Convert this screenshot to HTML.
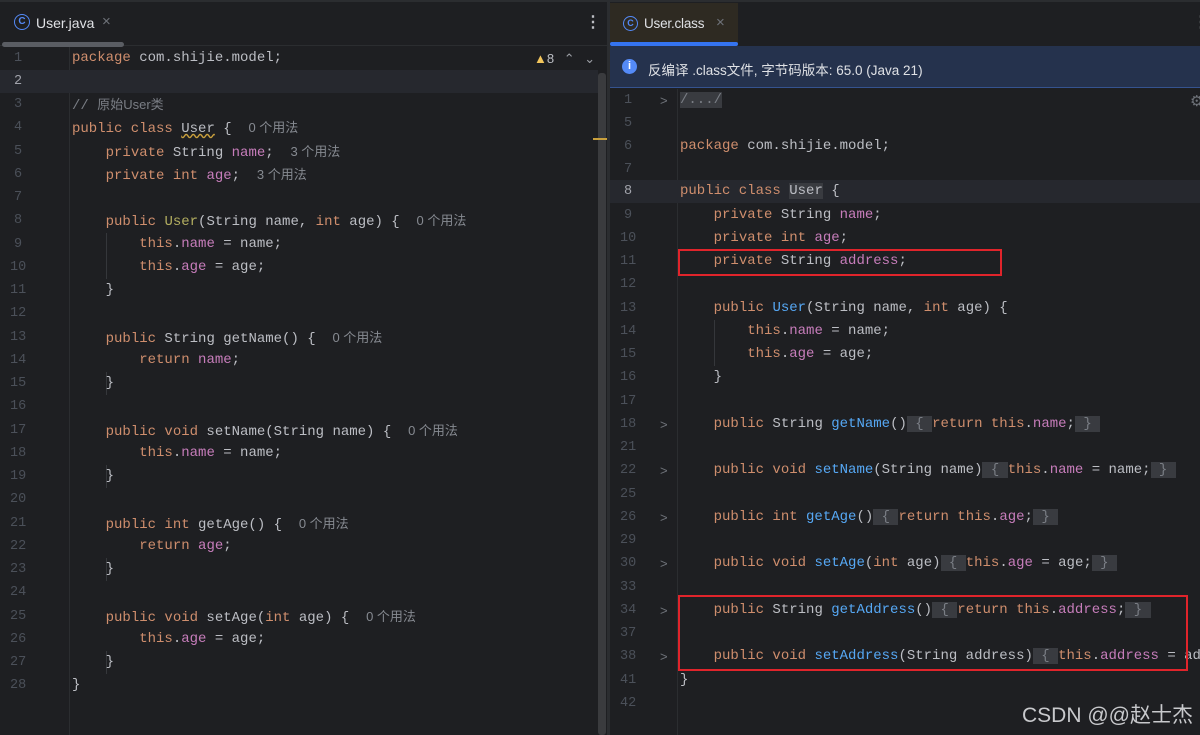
<!DOCTYPE html>
<html><head><meta charset="utf-8"><style>
*{margin:0;padding:0;box-sizing:border-box}
body{width:1200px;height:735px;overflow:hidden;background:#1e1f22;font-family:"Liberation Mono",monospace;font-size:14px;color:#bcbec4;position:relative}
.abs{position:absolute}
.ln{position:absolute;white-space:pre;height:23px;line-height:23px}
.num{position:absolute;color:#4b5059;font-size:13.5px;height:23px;line-height:23px}
.k{color:#cf8e6d}.f{color:#c77dbb}.m{color:#56a8f5}.c{color:#7a7e85}
.h{color:#868a91;font-family:"Liberation Sans","Noto Sans CJK SC",sans-serif;font-size:13px}
.fb{background:#393b40;color:#7a7e85}
.ui{font-family:"Liberation Sans","Noto Sans CJK SC",sans-serif}
.arr{position:absolute;color:#6f737a;font-family:"Liberation Sans",sans-serif;font-size:13px;height:23px;line-height:23px}
</style></head><body>
<div class="abs" style="left:0;top:0;width:607px;height:46px;background:#1e1f22;border-bottom:1px solid #2b2d30"></div>
<div class="abs" style="left:0;top:0;width:1200px;height:2px;background:#2b2d30"></div>
<div class="abs ui" style="left:14px;top:14px;width:16px;height:16px;border:1.5px solid #548af7;border-radius:50%;color:#548af7;font-size:10px;line-height:13px;text-align:center;font-weight:bold">C</div>
<div class="abs ui" style="left:36px;top:15px;font-size:14px;color:#dfe1e5">User.java</div>
<div class="abs ui" style="left:102px;top:13px;font-size:15px;color:#6f737a">×</div>
<div class="abs" style="left:2px;top:42px;width:122px;height:5px;background:#5a5d63;border-radius:3px"></div>
<div class="abs ui" style="left:585px;top:12px;color:#bcbec4;font-size:16px;font-weight:bold">⋮</div>
<div class="abs" style="left:610px;top:3px;width:128px;height:42px;background:#2e2a22"></div>
<div class="abs" style="left:610px;top:42px;width:128px;height:4px;background:#3574f0;border-radius:2px"></div>
<div class="abs ui" style="left:623px;top:16px;width:15px;height:15px;border:1.5px solid #548af7;border-radius:50%;color:#548af7;font-size:9px;line-height:12px;text-align:center;font-weight:bold">C</div>
<div class="abs ui" style="left:644px;top:16px;font-size:13.5px;color:#dfe1e5;letter-spacing:-0.2px">User.class</div>
<div class="abs ui" style="left:716px;top:14px;font-size:15px;color:#6f737a">×</div>
<div class="abs ui" style="left:1193px;top:12px;color:#bcbec4;font-size:16px;font-weight:bold">⋮</div>
<div class="abs" style="left:608px;top:46px;width:592px;height:42px;background:#25324d;border-bottom:1px solid #35538f"></div>
<div class="abs ui" style="left:622px;top:59px;width:15px;height:15px;border-radius:50%;background:#548af7;color:#fff;font-size:11px;line-height:15px;text-align:center;font-weight:bold">i</div>
<div class="abs ui" style="left:648px;top:59px;font-size:13.5px;color:#dfe1e5">反编译 .class文件, 字节码版本: 65.0 (Java 21)</div>
<div class="abs" style="left:607px;top:0;width:3px;height:735px;background:#2b2d30"></div>
<div class="abs" style="left:598px;top:73px;width:8px;height:662px;background:#3a3b3e;border-radius:3px"></div>
<div class="abs" style="left:593px;top:138px;width:14px;height:2px;background:#c9a03d"></div>
<div class="abs" style="left:69px;top:47px;width:1px;height:688px;background:#2b2d30"></div>
<div class="abs" style="left:0;top:70px;width:598px;height:23px;background:#26282e"></div>
<div class="abs ui" style="left:534px;top:51px;font-size:13px;color:#bcbec4"><span style="color:#f2c55c">▲</span>8 <span style="color:#9a9da3;margin-left:6px">⌃</span> <span style="color:#9a9da3;margin-left:6px">⌄</span></div>
<div class="abs" style="left:677px;top:89px;width:1px;height:646px;background:#2b2d30"></div>
<div class="abs" style="left:610px;top:180px;width:590px;height:23px;background:#26282e"></div>
<div class="abs" style="left:106px;top:233px;width:1px;height:46px;background:#35373b"></div>
<div class="abs" style="left:106px;top:372px;width:1px;height:23px;background:#35373b"></div>
<div class="abs" style="left:106px;top:465px;width:1px;height:23px;background:#35373b"></div>
<div class="abs" style="left:106px;top:558px;width:1px;height:23px;background:#35373b"></div>
<div class="abs" style="left:106px;top:651px;width:1px;height:23px;background:#35373b"></div>
<div class="abs" style="left:714px;top:320px;width:1px;height:46px;background:#35373b"></div>

<div class="num" style="left:14px;top:47px">1</div><div class="ln" style="left:72px;top:47px"><span class="k">package</span> com.shijie.model;</div>
<div class="num" style="left:14px;top:70px;color:#a1a3ab">2</div>
<div class="num" style="left:14px;top:93px">3</div><div class="ln" style="left:72px;top:93px"><span class="c">// </span><span class="c ui" style="font-size:13px">原始User类</span></div>
<div class="num" style="left:14px;top:116px">4</div><div class="ln" style="left:72px;top:116px"><span class="k">public class</span> <span style="text-decoration:underline wavy #c9a03d">User</span> {  <span class="h">0 个用法</span></div>
<div class="num" style="left:14px;top:140px">5</div><div class="ln" style="left:72px;top:140px">    <span class="k">private</span> String <span class="f">name</span>;  <span class="h">3 个用法</span></div>
<div class="num" style="left:14px;top:163px">6</div><div class="ln" style="left:72px;top:163px">    <span class="k">private int</span> <span class="f">age</span>;  <span class="h">3 个用法</span></div>
<div class="num" style="left:14px;top:186px">7</div>
<div class="num" style="left:14px;top:209px">8</div><div class="ln" style="left:72px;top:209px">    <span class="k">public</span> <span style="color:#b3ae60">User</span>(String name, <span class="k">int</span> age) {  <span class="h">0 个用法</span></div>
<div class="num" style="left:14px;top:233px">9</div><div class="ln" style="left:72px;top:233px">        <span class="k">this</span>.<span class="f">name</span> = name;</div>
<div class="num" style="left:10px;top:256px">10</div><div class="ln" style="left:72px;top:256px">        <span class="k">this</span>.<span class="f">age</span> = age;</div>
<div class="num" style="left:10px;top:279px">11</div><div class="ln" style="left:72px;top:279px">    }</div>
<div class="num" style="left:10px;top:302px">12</div>
<div class="num" style="left:10px;top:326px">13</div><div class="ln" style="left:72px;top:326px">    <span class="k">public</span> String getName() {  <span class="h">0 个用法</span></div>
<div class="num" style="left:10px;top:349px">14</div><div class="ln" style="left:72px;top:349px">        <span class="k">return</span> <span class="f">name</span>;</div>
<div class="num" style="left:10px;top:372px">15</div><div class="ln" style="left:72px;top:372px">    }</div>
<div class="num" style="left:10px;top:395px">16</div>
<div class="num" style="left:10px;top:419px">17</div><div class="ln" style="left:72px;top:419px">    <span class="k">public void</span> setName(String name) {  <span class="h">0 个用法</span></div>
<div class="num" style="left:10px;top:442px">18</div><div class="ln" style="left:72px;top:442px">        <span class="k">this</span>.<span class="f">name</span> = name;</div>
<div class="num" style="left:10px;top:465px">19</div><div class="ln" style="left:72px;top:465px">    }</div>
<div class="num" style="left:10px;top:488px">20</div>
<div class="num" style="left:10px;top:512px">21</div><div class="ln" style="left:72px;top:512px">    <span class="k">public int</span> getAge() {  <span class="h">0 个用法</span></div>
<div class="num" style="left:10px;top:535px">22</div><div class="ln" style="left:72px;top:535px">        <span class="k">return</span> <span class="f">age</span>;</div>
<div class="num" style="left:10px;top:558px">23</div><div class="ln" style="left:72px;top:558px">    }</div>
<div class="num" style="left:10px;top:581px">24</div>
<div class="num" style="left:10px;top:605px">25</div><div class="ln" style="left:72px;top:605px">    <span class="k">public void</span> setAge(<span class="k">int</span> age) {  <span class="h">0 个用法</span></div>
<div class="num" style="left:10px;top:628px">26</div><div class="ln" style="left:72px;top:628px">        <span class="k">this</span>.<span class="f">age</span> = age;</div>
<div class="num" style="left:10px;top:651px">27</div><div class="ln" style="left:72px;top:651px">    }</div>
<div class="num" style="left:10px;top:674px">28</div><div class="ln" style="left:72px;top:674px">}</div>

<div class="num" style="left:624px;top:89px">1</div><div class="arr" style="left:660px;top:89px">&gt;</div><div class="ln" style="left:680px;top:89px"><span class="fb">/.../</span></div>
<div class="num" style="left:624px;top:112px">5</div>
<div class="num" style="left:624px;top:135px">6</div><div class="ln" style="left:680px;top:135px"><span class="k">package</span> com.shijie.model;</div>
<div class="num" style="left:624px;top:158px">7</div>
<div class="num" style="left:624px;top:180px;color:#a1a3ab">8</div><div class="ln" style="left:680px;top:180px"><span class="k">public class</span> <span style="background:#393b40">User</span> {</div>
<div class="num" style="left:624px;top:204px">9</div><div class="ln" style="left:680px;top:204px">    <span class="k">private</span> String <span class="f">name</span>;</div>
<div class="num" style="left:620px;top:227px">10</div><div class="ln" style="left:680px;top:227px">    <span class="k">private int</span> <span class="f">age</span>;</div>
<div class="num" style="left:620px;top:250px">11</div><div class="ln" style="left:680px;top:250px">    <span class="k">private</span> String <span class="f">address</span>;</div>
<div class="num" style="left:620px;top:273px">12</div>
<div class="num" style="left:620px;top:297px">13</div><div class="ln" style="left:680px;top:297px">    <span class="k">public</span> <span class="m">User</span>(String name, <span class="k">int</span> age) {</div>
<div class="num" style="left:620px;top:320px">14</div><div class="ln" style="left:680px;top:320px">        <span class="k">this</span>.<span class="f">name</span> = name;</div>
<div class="num" style="left:620px;top:343px">15</div><div class="ln" style="left:680px;top:343px">        <span class="k">this</span>.<span class="f">age</span> = age;</div>
<div class="num" style="left:620px;top:366px">16</div><div class="ln" style="left:680px;top:366px">    }</div>
<div class="num" style="left:620px;top:390px">17</div>
<div class="num" style="left:620px;top:413px">18</div><div class="arr" style="left:660px;top:413px">&gt;</div><div class="ln" style="left:680px;top:413px">    <span class="k">public</span> String <span class="m">getName</span>()<span class="fb"> { </span><span class="k">return this</span>.<span class="f">name</span>;<span class="fb"> } </span></div>
<div class="num" style="left:620px;top:436px">21</div>
<div class="num" style="left:620px;top:459px">22</div><div class="arr" style="left:660px;top:459px">&gt;</div><div class="ln" style="left:680px;top:459px">    <span class="k">public void</span> <span class="m">setName</span>(String name)<span class="fb"> { </span><span class="k">this</span>.<span class="f">name</span> = name;<span class="fb"> } </span></div>
<div class="num" style="left:620px;top:483px">25</div>
<div class="num" style="left:620px;top:506px">26</div><div class="arr" style="left:660px;top:506px">&gt;</div><div class="ln" style="left:680px;top:506px">    <span class="k">public int</span> <span class="m">getAge</span>()<span class="fb"> { </span><span class="k">return this</span>.<span class="f">age</span>;<span class="fb"> } </span></div>
<div class="num" style="left:620px;top:529px">29</div>
<div class="num" style="left:620px;top:552px">30</div><div class="arr" style="left:660px;top:552px">&gt;</div><div class="ln" style="left:680px;top:552px">    <span class="k">public void</span> <span class="m">setAge</span>(<span class="k">int</span> age)<span class="fb"> { </span><span class="k">this</span>.<span class="f">age</span> = age;<span class="fb"> } </span></div>
<div class="num" style="left:620px;top:576px">33</div>
<div class="num" style="left:620px;top:599px">34</div><div class="arr" style="left:660px;top:599px">&gt;</div><div class="ln" style="left:680px;top:599px">    <span class="k">public</span> String <span class="m">getAddress</span>()<span class="fb"> { </span><span class="k">return this</span>.<span class="f">address</span>;<span class="fb"> } </span></div>
<div class="num" style="left:620px;top:622px">37</div>
<div class="num" style="left:620px;top:645px">38</div><div class="arr" style="left:660px;top:645px">&gt;</div><div class="ln" style="left:680px;top:645px">    <span class="k">public void</span> <span class="m">setAddress</span>(String address)<span class="fb"> { </span><span class="k">this</span>.<span class="f">address</span> = address;</div>
<div class="num" style="left:620px;top:669px">41</div><div class="ln" style="left:680px;top:669px">}</div>
<div class="num" style="left:620px;top:692px">42</div>
<div class="abs ui" style="left:1190px;top:92px;color:#6f737a;font-size:15px">⚙</div>

<div class="abs" style="left:678px;top:249px;width:324px;height:27px;border:2.5px solid #e0242b"></div>
<div class="abs" style="left:678px;top:595px;width:510px;height:76px;border:2.5px solid #e0242b"></div>
<div class="abs ui" style="left:1022px;top:699px;font-size:21px;color:#c8c9cc">CSDN @@赵士杰</div>
</body></html>
